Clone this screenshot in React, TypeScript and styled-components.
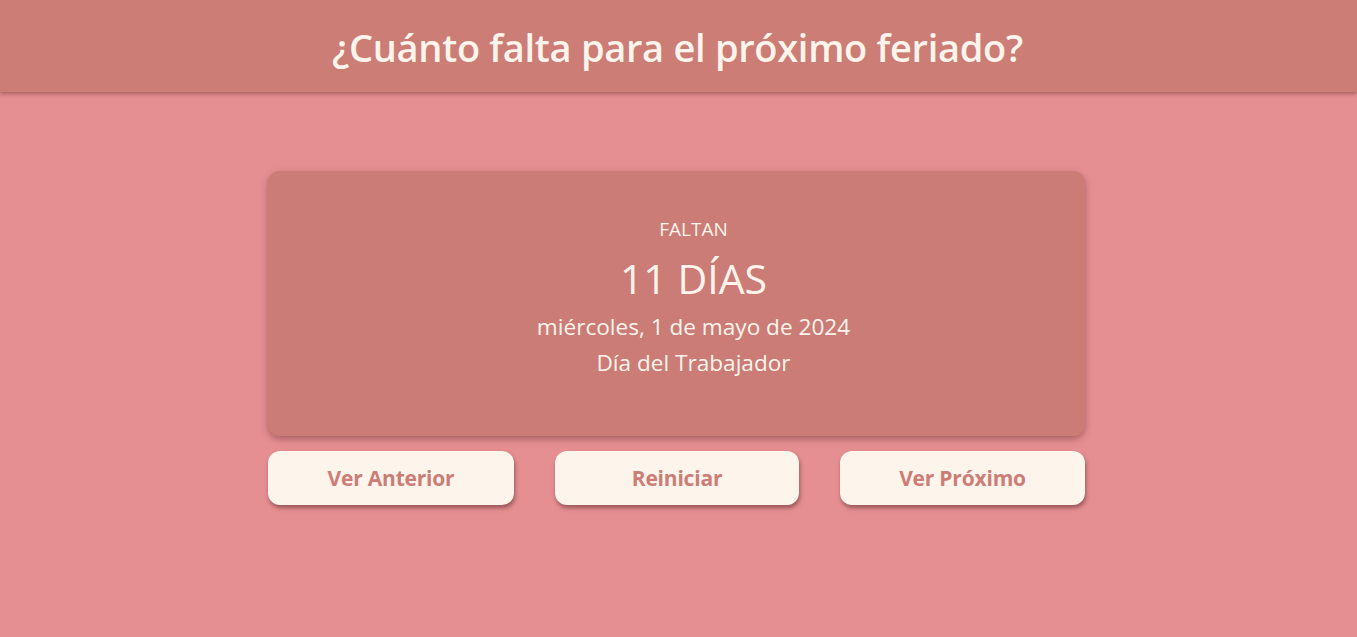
import React from "react";
import styled, { createGlobalStyle } from "styled-components";

const Global = createGlobalStyle`
  html, body { margin: 0; padding: 0; }
  body {
    background: #e68f92;
    font-family: "Open Sans", "Noto Sans", sans-serif;
    min-height: 637px;
  }
`;

const Header = styled.header`
  height: 92px;
  background: #cb7d76;
  box-shadow: 0 2px 4px rgba(90, 40, 40, 0.45);
  display: flex;
  align-items: center;
  justify-content: center;
  padding-right: 2px;
`;

const Title = styled.h1`
  margin: 0;
  color: #fdf4ec;
  font-size: 38px;
  font-weight: 600;
  letter-spacing: -0.3px;
  padding-top: 2px;
`;

const Main = styled.main`
  display: flex;
  flex-direction: column;
  align-items: center;
  padding-top: 79px;
  padding-right: 4px;
`;

const Column = styled.div`
  width: 817px;
  display: flex;
  flex-direction: column;
  gap: 15px;
`;

const Card = styled.section`
  height: 265px;
  box-sizing: border-box;
  background: #cb7c76;
  border-radius: 12px;
  box-shadow: 0 3px 7px rgba(90, 40, 40, 0.45);
  display: flex;
  flex-direction: column;
  align-items: center;
  color: #fdf4ec;
  padding: 40px 0 0 34px;
`;

const Label = styled.div<{ $size: number; $lh: number }>`
  font-size: ${(p) => p.$size}px;
  line-height: ${(p) => p.$lh}px;
`;

const Buttons = styled.div`
  display: grid;
  grid-template-columns: 246px 244px 245px;
  justify-content: space-between;
`;

const Button = styled.button`
  height: 54px;
  border: none;
  border-radius: 12px;
  background: #fdf4ec;
  color: #cb7d76;
  font-family: inherit;
  font-size: 21px;
  font-weight: 700;
  letter-spacing: -0.2px;
  box-shadow: 1px 3px 4px rgba(90, 40, 40, 0.55);
  cursor: pointer;
`;

export default function App() {
  return (
    <>
      <Global />
      <Header>
        <Title>¿Cuánto falta para el próximo feriado?</Title>
      </Header>
      <Main>
        <Column>
          <Card>
            <Label $size={19} $lh={36}>FALTAN</Label>
            <Label $size={41} $lh={62}>11 DÍAS</Label>
            <Label $size={22.6} $lh={36}>miércoles, 1 de mayo de 2024</Label>
            <Label $size={22.6} $lh={36}>Día del Trabajador</Label>
          </Card>
          <Buttons>
            <Button>Ver Anterior</Button>
            <Button>Reiniciar</Button>
            <Button>Ver Próximo</Button>
          </Buttons>
        </Column>
      </Main>
    </>
  );
}
